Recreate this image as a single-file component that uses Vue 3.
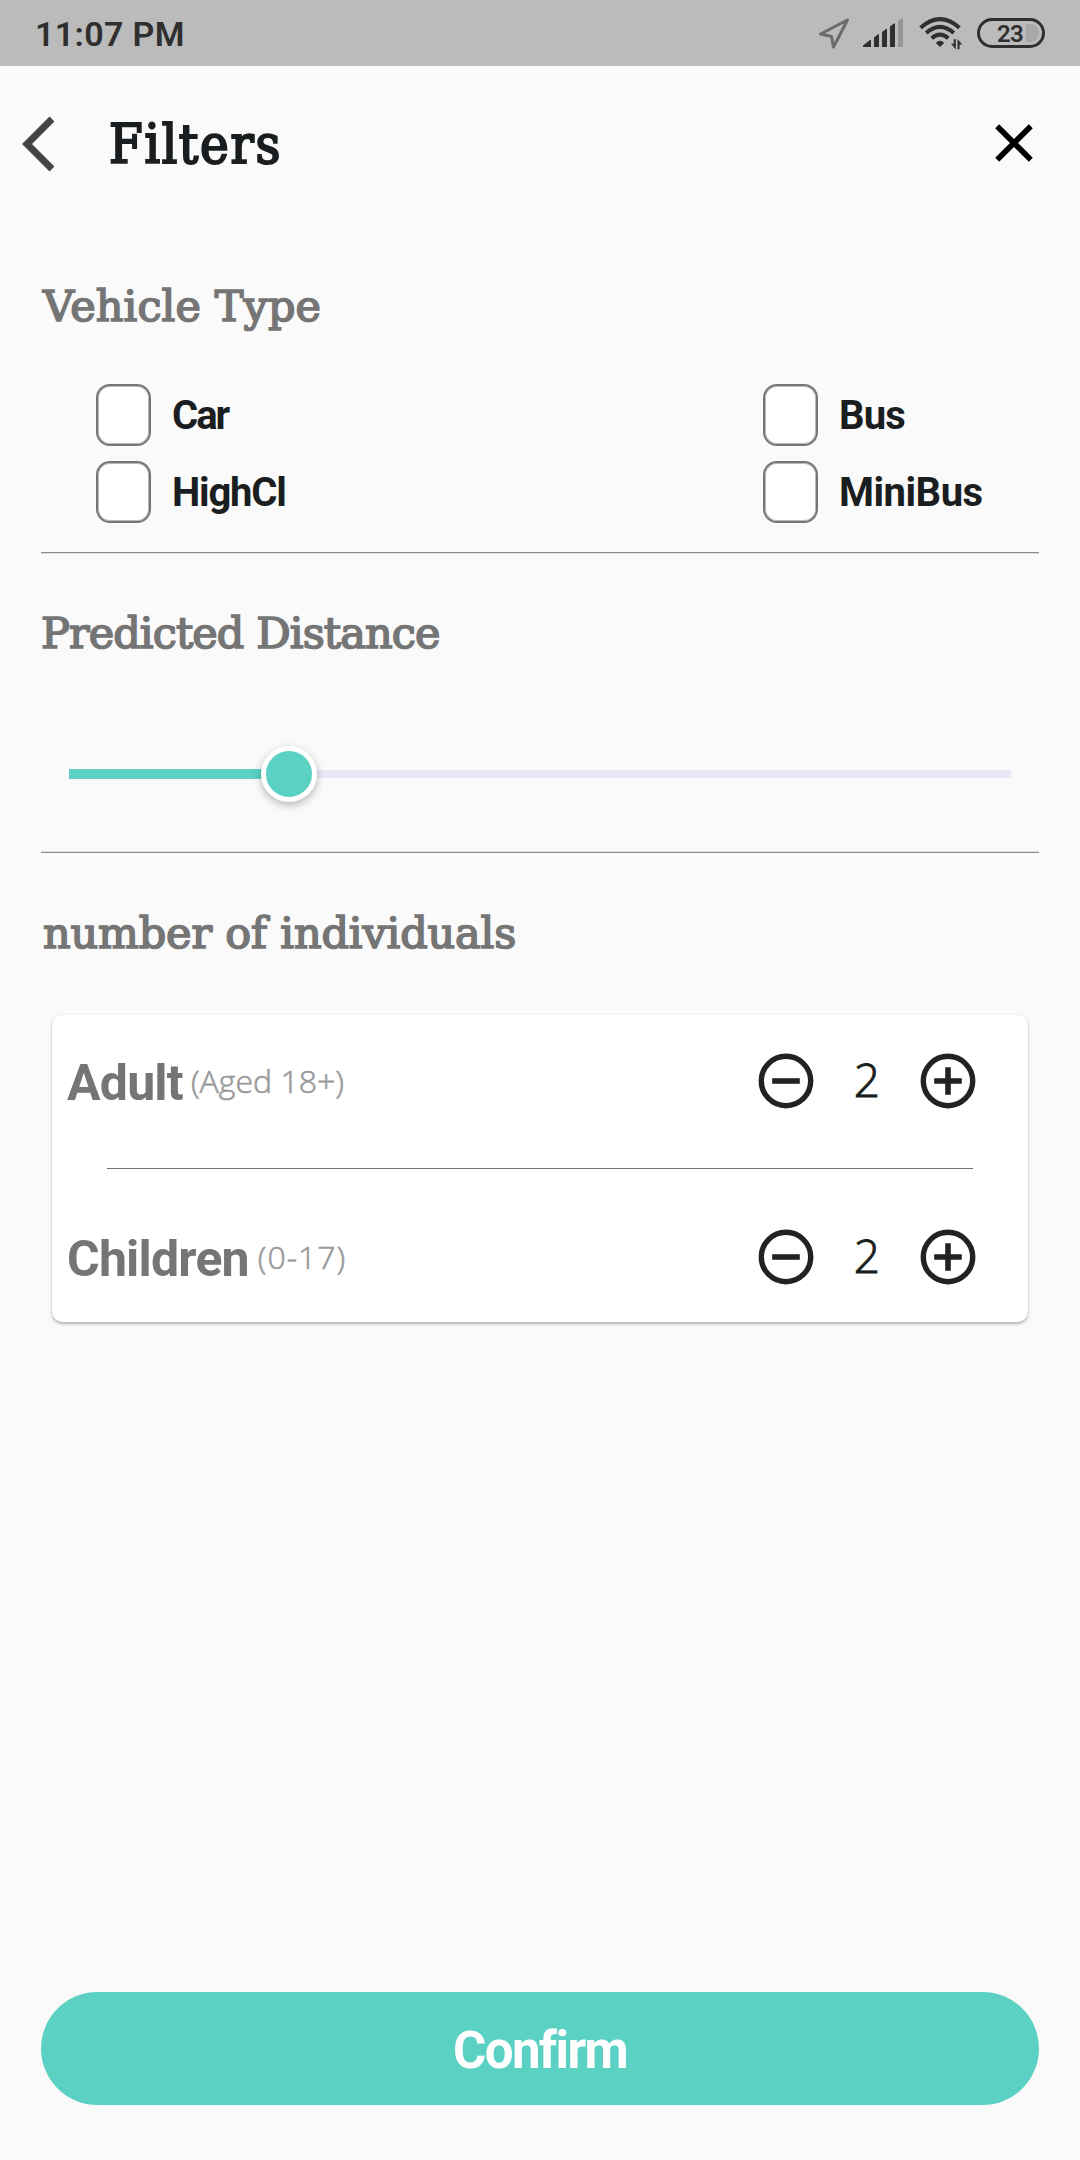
<script setup>
import { ref, reactive } from 'vue'

const vehicles = reactive([
  { id: 'car', label: 'Car', checked: false },
  { id: 'bus', label: 'Bus', checked: false },
  { id: 'highcl', label: 'HighCl', checked: false },
  { id: 'minibus', label: 'MiniBus', checked: false },
])

const groups = reactive([
  { id: 'adult', name: 'Adult', note: '(Aged 18+)', count: 2 },
  { id: 'children', name: 'Children', note: '(0-17)', count: 2 },
])

const distance = ref(23.35)
</script>

<template>
  <div class="screen">
    <div class="status-bar">
      <span class="time">11:07 PM</span>
      <div class="status-icons">
        <svg class="icon-location" width="34" height="34" viewBox="0 0 34 34">
          <path d="M30.500 4 L3.500 18 L14.500 20.500 L16.500 31 Z" fill="none" stroke="#6b6b6b" stroke-width="3" stroke-linejoin="round" />
        </svg>
        <svg class="icon-signal" width="41" height="30" viewBox="0 0 41 30">
          <path d="M0 29V27.500L7 22Q8 21.500 8 22.500V29Z" fill="#2f2f2f" />
          <path d="M11 29V19.500L15 16.200Q16 15.700 16 16.700V29Z" fill="#2f2f2f" />
          <path d="M19 29V14L23 11Q24 10.500 24 11.500V29Z" fill="#2f2f2f" />
          <path d="M27 29V8.500L31 5.500Q32 5 32 6V29Z" fill="#2f2f2f" />
          <path d="M35 29V3L39 .300Q40 0 40 1V29Z" fill="#969696" />
        </svg>
        <svg class="icon-wifi" width="44" height="34" viewBox="0 0 44 34">
          <g fill="none" stroke="#2f2f2f" stroke-width="4">
            <path d="M1.600 11.800Q21 -5.400 40.400 11.800" />
            <path d="M7.200 17Q21 4.800 34.800 17" />
            <path d="M12.700 22.200Q21 15 29.300 22.200" />
          </g>
          <path d="M21 31L16.800 27Q21 22.300 25.200 27Z" fill="#2f2f2f" />
          <path d="M36.800 23.300V33.500L32 27.800H34.700V23.300ZM38.500 33.200V23L43.300 28.600H40.600V33.200Z" fill="#2f2f2f" />
        </svg>
        <div class="battery">
          <span class="battery-level">23</span>
          <span class="battery-rest"></span>
        </div>
      </div>
    </div>

    <header class="header">
      <svg class="back" width="34" height="58" viewBox="0 0 34 58">
        <path d="M32 4L7 29L32 54" fill="none" stroke="#444" stroke-width="7" />
      </svg>
      <h1 class="title">Filters</h1>
      <svg class="close" width="38" height="38" viewBox="0 0 38 38">
        <path d="M2.200 2.200L35.800 35.800M35.800 2.200L2.200 35.800" stroke="#000" stroke-width="5.600" />
      </svg>
    </header>

    <main class="content">
      <section>
        <h2 class="heading vehicle">Vehicle Type</h2>
        <div class="vehicles">
          <label v-for="v in vehicles" :key="v.id" class="option" @click="v.checked = !v.checked">
            <span class="box"></span>
            <span class="label" :class="v.id">{{ v.label }}</span>
          </label>
        </div>
        <div class="divider"></div>
      </section>

      <section>
        <h2 class="heading distance">Predicted Distance</h2>
        <div class="slider">
          <div class="active" :style="{ width: distance + '%' }"></div>
          <div class="thumb"></div>
          <div class="rest"></div>
        </div>
        <div class="divider lower"></div>
      </section>

      <section>
        <h2 class="heading people">number of individuals</h2>
        <div class="card">
          <template v-for="(g, i) in groups" :key="g.id">
            <div v-if="i > 0" class="card-divider"></div>
            <div class="row">
              <span class="name" :class="g.id">{{ g.name }}</span>
              <span class="note" :class="g.id">{{ g.note }}</span>
              <svg class="round" width="56" height="56" viewBox="0 0 56 56" @click="g.count--">
                <circle cx="28" cy="28" r="24.700" fill="none" stroke="#222" stroke-width="5.400" />
                <path d="M14.200 28H41.800" stroke="#222" stroke-width="5.600" />
              </svg>
              <span class="count">{{ g.count }}</span>
              <svg class="round" width="56" height="56" viewBox="0 0 56 56" @click="g.count++">
                <circle cx="28" cy="28" r="24.700" fill="none" stroke="#222" stroke-width="5.400" />
                <path d="M14.200 28H41.800M28 14.200V41.800" stroke="#222" stroke-width="5.600" />
              </svg>
            </div>
          </template>
        </div>
      </section>
    </main>

    <button class="confirm">Confirm</button>
  </div>
</template>

<style>
body {
  background: #fafafa;
}
</style>

<style scoped>
.screen {
  display: flex;
  flex-direction: column;
  width: 1080px;
  height: 2160px;
  background: #fafafa;
  font-family: "Open Sans", sans-serif;
  color: #1a1e20;
  overflow: hidden;
}
.status-bar {
  display: flex;
  align-items: center;
  justify-content: space-between;
  height: 66px;
  padding: 0 35px 0 35px;
  background: #bbb;
}
.time {
  margin-top: 2px;
  font: 600 34px/40px Roboto, sans-serif;
  color: #2f2f2f;
  letter-spacing: .35px;
}
.status-icons {
  display: flex;
  align-items: center;
}
.icon-location { margin-right: 12px; }
.icon-signal { margin-right: 15px; }
.icon-wifi { margin-right: 14px; }
.battery {
  display: flex;
  align-items: center;
  box-sizing: border-box;
  width: 68px;
  height: 30px;
  padding-left: 17px;
  border: 3px solid #2f2f2f;
  border-radius: 15px;
}
.battery-level {
  width: 29px;
  margin-top: 1px;
  font: 600 24px/24px Roboto, sans-serif;
  letter-spacing: -.8px;
  color: #2f2f2f;
}
.battery-rest {
  width: 13px;
  height: 18px;
  background: #a8a8a8;
  border-radius: 1px 9px 9px 1px;
}
.header {
  display: flex;
  align-items: center;
  height: 156px;
  padding: 0 47px 0 20px;
}
.title {
  flex: 1;
  margin: 2px 0 0 55px;
  font: 400 54px/70px "DejaVu Serif Condensed", "DejaVu Serif", serif;
  letter-spacing: 1.700px;
  -webkit-text-stroke: 2.100px #1a1e20;
}
.close {
  margin-top: -2px;
}
.content {
  flex: 1;
  padding: 54px 41px 0;
}
.heading {
  margin: 0;
  height: 60px;
  font: 400 43px/60px "DejaVu Serif", serif;
  color: #757575;
  -webkit-text-stroke: 1.700px #757575;
  white-space: nowrap;
}
.heading.vehicle { margin-left: 2px; letter-spacing: .1px; }
.heading.distance { letter-spacing: -.900px; }
.heading.people { margin-left: 2px; letter-spacing: -.150px; }
.vehicles {
  display: grid;
  grid-template-columns: 667px 1fr;
  gap: 15px 0;
  margin: 48px 0 29px;
  padding-left: 55px;
}
.option {
  display: flex;
  align-items: center;
  height: 62px;
}
.box {
  box-sizing: border-box;
  width: 55px;
  height: 62px;
  margin-right: 21px;
  border: 2px solid #757575;
  border-radius: 14px;
  background: #fff;
  box-shadow: inset 0 0 0 1px rgba(117, 117, 117, .5);
}
.label {
  margin-top: 2px;
  font: 700 40px/60px Roboto, sans-serif;
}
.label.car { letter-spacing: -2px; }
.label.highcl { letter-spacing: -1.200px; }
.label.bus { letter-spacing: -.9px; }
.label.minibus { letter-spacing: -.5px; }
.divider {
  height: 1px;
  background: #8c8c8c;
  border-bottom: 1px solid #ddd;
  margin-bottom: 49px;
}
.divider.lower {
  border-bottom: 0;
  border-top: 1px solid #ddd;
  margin-bottom: 50px;
}
.slider {
  display: flex;
  align-items: center;
  height: 56px;
  margin: 83px 28px 49px;
}
.active {
  height: 10px;
  background: #5bd1c3;
}
.thumb {
  z-index: 1;
  flex: none;
  box-sizing: border-box;
  width: 56px;
  height: 56px;
  margin: 0 -28px;
  border: 5.500px solid #fff;
  border-radius: 50%;
  background: #5bd1c3;
  box-shadow: 0 3px 9px rgba(0, 0, 0, .28);
}
.rest {
  flex: 1;
  height: 8px;
  background: #e9e7f8;
}
.card {
  box-sizing: border-box;
  height: 307px;
  margin: 52px 11px 0;
  padding-top: 1px;
  border-radius: 10px;
  background: #fff;
  box-shadow: 0 2px 3px rgba(0, 0, 0, .28), 0 0 2px rgba(0, 0, 0, .1);
}
.row {
  display: flex;
  align-items: center;
  height: 130px;
  padding: 0 52px 0 15px;
}
.name {
  margin-top: 3px;
  font: 700 50px/60px Roboto, sans-serif;
  letter-spacing: -.8px;
  color: #757575;
}
.name.adult { letter-spacing: -.8px; }
.note {
  flex: 1;
  margin-left: 8px;
  margin-top: -2px;
  font-size: 32px;
  font-weight: 300;
  -webkit-text-stroke: .6px #9a9a9a;
  color: #9a9a9a;
}
.note.children { margin-left: 9px; letter-spacing: 1px; }
.count {
  width: 106px;
  text-align: center;
  font-size: 46px;
  font-weight: 300;
  -webkit-text-stroke: .9px #1a1e20;
  margin-top: -4px;
}
.card-divider {
  height: 1px;
  margin: 22px 55px 23px;
  background: #707070;
}
.confirm {
  height: 113px;
  margin: 0 41px 55px;
  padding: 4px 0 0;
  border: 0;
  border-radius: 56.500px;
  background: #5bd1c3;
  color: #fff;
  font: 700 51px/60px Roboto, sans-serif;
  letter-spacing: -1.600px;
}
</style>
